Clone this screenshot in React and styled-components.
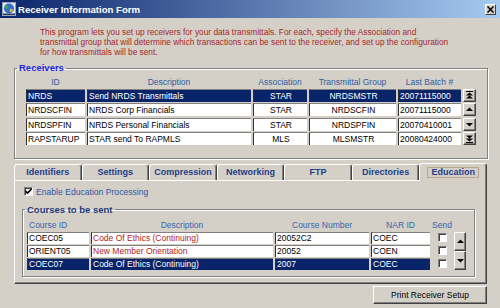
import React from "react"
import styled, { createGlobalStyle } from "styled-components"

const GlobalStyle = createGlobalStyle`
  * { box-sizing: border-box; }
  html, body { margin: 0; padding: 0; background: #d4d0c8; }
  body { font-family: "Liberation Sans", Arial, sans-serif; }
`

const receivers = [
  { id: "NRDS", desc: "Send NRDS Transmittals", assoc: "STAR", group: "NRDSMSTR", batch: "20071115000", nav: "first", sel: true },
  { id: "NRDSCFIN", desc: "NRDS Corp Financials", assoc: "STAR", group: "NRDSCFIN", batch: "20071115000", nav: "prev" },
  { id: "NRDSPFIN", desc: "NRDS Personal Financials", assoc: "STAR", group: "NRDSPFIN", batch: "20070410001", nav: "next" },
  { id: "RAPSTARUP", desc: "STAR send To RAPMLS", assoc: "MLS", group: "MLSMSTR", batch: "20080424000", nav: "last" },
]

const courses = [
  { id: "COEC05", desc: "Code Of Ethics (Continuing)", num: "20052C2", nar: "COEC" },
  { id: "ORIENT05", desc: "New Member Orientation", num: "20052", nar: "COEN" },
  { id: "COEC07", desc: "Code Of Ethics (Continuing)", num: "2007", nar: "COEC", sel: true },
]

const tabs = ["Identifiers", "Settings", "Compression", "Networking", "FTP", "Directories", "Education"]

const NavIcon = ({ kind }) => (
  <svg width="9" height="9" viewBox="0 0 9 9">
    {kind === "first" && (
      <g fill="#000">
        <rect x="1" y="0" width="7" height="1" />
        <polygon points="4.5,1.5 8,4.5 1,4.5" />
        <polygon points="4.5,4.5 8,7.5 1,7.5" />
      </g>
    )}
    {kind === "prev" && <polygon points="4.5,2.5 8,6 1,6" fill="#000" />}
    {kind === "next" && <polygon points="1,3 8,3 4.5,6.5" fill="#000" />}
    {kind === "last" && (
      <g fill="#000">
        <polygon points="1,1.5 8,1.5 4.5,4.5" />
        <polygon points="1,4.5 8,4.5 4.5,7.5" />
        <rect x="1" y="8" width="7" height="1" />
      </g>
    )}
  </svg>
)

const App = () => {
  return (
    <Window>
      <GlobalStyle />
      <TitleBar>
        <svg width="14" height="14" viewBox="0 0 14 14">
          <rect x="0.5" y="0.5" width="13" height="13" fill="#e4e4e4" stroke="#9aa6b8" />
          <circle cx="7" cy="6.5" r="5" fill="#2f6fd0" />
          <path d="M4 3.5 C6 3 7 4.5 6 6 C5 7.5 3.5 7 2.6 5.5 Z" fill="#3fa83a" />
          <path d="M8 7 C9.5 6.5 11.5 7.5 10.5 9.5 C9.5 10.5 8 10 7.8 8.8 Z" fill="#e0c030" />
          <rect x="1" y="11.5" width="12" height="1.5" fill="#2a3a60" />
        </svg>
        <TitleText>Receiver Information Form</TitleText>
        <CloseButton>
          <svg width="7" height="7" viewBox="0 0 7 7">
            <path d="M0.5 0.5 L6.5 6.5 M6.5 0.5 L0.5 6.5" stroke="#000" strokeWidth="1.5" />
          </svg>
        </CloseButton>
      </TitleBar>

      <Intro>
        This program lets you set up receivers for your data transmittals. For each, specify the Association and<br />
        transmittal group that will determine which transactions can be sent to the receiver, and set up the configuration<br />
        for how transmittals will be sent.
      </Intro>

      <ReceiversGroup>
        <Legend $color="#2323dc">Receivers</Legend>
        <ReceiverList>
          <ReceiverGrid $header>
            <HeadCell>ID</HeadCell>
            <HeadCell>Description</HeadCell>
            <HeadCell>Association</HeadCell>
            <HeadCell>Transmittal Group</HeadCell>
            <HeadCell>Last Batch #</HeadCell>
            <span />
          </ReceiverGrid>
          <ReceiverGrid>
            {receivers.map((r) => (
              <React.Fragment key={r.id}>
                <Cell $sel={r.sel}>{r.id}</Cell>
                <Cell $sel={r.sel}>{r.desc}</Cell>
                <Cell $sel={r.sel} $center>{r.assoc}</Cell>
                <Cell $sel={r.sel} $center>{r.group}</Cell>
                <Cell $sel={r.sel}>{r.batch}</Cell>
                <NavButton><NavIcon kind={r.nav} /></NavButton>
              </React.Fragment>
            ))}
          </ReceiverGrid>
        </ReceiverList>
      </ReceiversGroup>

      <TabStrip>
        {tabs.map((t) => (
          <Tab key={t} $active={t === "Education"}>
            {t === "Education" ? <Focus>{t}</Focus> : t}
          </Tab>
        ))}
      </TabStrip>
      <TabPanel>
        <CheckRow>
          <CheckBox>
            <svg width="7" height="7" viewBox="0 0 7 7">
              <path d="M0.5 3 L2.5 5 L6.5 1" stroke="#000" strokeWidth="1.6" fill="none" />
            </svg>
          </CheckBox>
          Enable Education Processing
        </CheckRow>
        <CoursesGroup>
          <Legend $color="#1c3a7c">Courses to be sent</Legend>
          <CourseList>
            <CourseGrid $header>
              <HeadCell $left $color="#3366b0">Course ID</HeadCell>
              <HeadCell $color="#3366b0">Description</HeadCell>
              <HeadCell $color="#3366b0">Course Number</HeadCell>
              <HeadCell $color="#3366b0">NAR ID</HeadCell>
              <HeadCell $color="#3366b0">Send</HeadCell>
              <span />
            </CourseGrid>
            <CourseGrid>
              {courses.map((c) => (
                <React.Fragment key={c.id + c.num}>
                  <Cell $sel={c.sel} $small>{c.id}</Cell>
                  <Cell $sel={c.sel} $small $red={!c.sel}>{c.desc}</Cell>
                  <Cell $sel={c.sel} $small>{c.num}</Cell>
                  <Cell $sel={c.sel} $small>{c.nar}</Cell>
                  <SendCell><CheckBox /></SendCell>
                </React.Fragment>
              ))}
              <Scroller>
                <NavButton $tall><NavIcon kind="prev" /></NavButton>
                <NavButton $tall><NavIcon kind="next" /></NavButton>
              </Scroller>
            </CourseGrid>
          </CourseList>
        </CoursesGroup>
      </TabPanel>

      <PrintButton>Print Receiver Setup</PrintButton>
    </Window>
  )
}

export default App

const Window = styled.div`
  width: 500px;
  height: 308px;
  overflow: hidden;
  background: #d4d0c8;
  display: flex;
  flex-direction: column;
  font-family: "Liberation Sans", Arial, sans-serif;
`

const TitleBar = styled.div`
  height: 18px;
  display: flex;
  align-items: center;
  gap: 2px;
  padding: 0 4px 0 2px;
  background: linear-gradient(to right, #0a246a, #a6caf0);
`

const TitleText = styled.span`
  color: #fff;
  font-weight: bold;
  font-size: 9.6px;
`

const CloseButton = styled.div`
  margin-left: auto;
  width: 11px;
  height: 11px;
  display: flex;
  align-items: center;
  justify-content: center;
  background: #d4d0c8;
  border: 1px solid;
  border-color: #fff #404040 #404040 #fff;
`

const Intro = styled.p`
  margin: 9px 0 0 40px;
  font-size: 8.3px;
  line-height: 10px;
  color: #a52828;
  white-space: nowrap;
`

const Group = styled.fieldset`
  padding: 0;
  min-width: 0;
  border: 1px solid #808080;
  box-shadow: inset 1px 1px #fff, 1px 1px #fff;
`

const ReceiversGroup = styled(Group)`
  margin: 6px 12px 0 14px;
`

const CoursesGroup = styled(Group)`
  margin: 8px 0 0 0;
`

const Legend = styled.legend`
  margin-left: 2px;
  padding: 0 2px;
  font-size: 9.5px;
  line-height: 10px;
  font-weight: bold;
  color: ${(p) => p.$color};
`

const ReceiverList = styled.div`
  padding: 4px 10px 13px 11px;
`

const ReceiverGrid = styled.div`
  display: grid;
  grid-template-columns: 59px 164px 54px 87px 63px 13px;
  column-gap: 2px;
  grid-auto-rows: ${(p) => (p.$header ? "10px" : "13px")};
  row-gap: 1.33px;
  margin-bottom: ${(p) => (p.$header ? "2px" : "0")};
`

const HeadCell = styled.div`
  font-size: 8.5px;
  line-height: 10px;
  color: ${(p) => p.$color || "#2f5d9f"};
  text-align: ${(p) => (p.$left ? "left" : "center")};
  padding-left: ${(p) => (p.$left ? "2px" : "0")};
  white-space: nowrap;
`

const Cell = styled.div`
  background: ${(p) => (p.$sel ? "#0a246a" : "#fff")};
  color: ${(p) => (p.$sel ? "#fff" : p.$red ? "#b01c1c" : "#000")};
  border-left: 1px solid #303030;
  border-top: 1px solid #808080;
  font-size: 8.5px;
  line-height: ${(p) => (p.$small ? "11px" : "12px")};
  padding-left: 1px;
  text-align: ${(p) => (p.$center ? "center" : "left")};
  white-space: nowrap;
  overflow: hidden;
`

const NavButton = styled.div`
  display: flex;
  align-items: center;
  justify-content: center;
  background: #d4d0c8;
  border: 1px solid;
  border-color: #fff #404040 #404040 #fff;
  box-shadow: inset -1px -1px #808080;
  ${(p) => p.$tall && "flex: 1;"}
`

const TabStrip = styled.div`
  margin: 4px 13px 0 14px;
  height: 17px;
  display: grid;
  grid-template-columns: repeat(7, 1fr);
  align-items: end;
  position: relative;
  z-index: 1;
`

const Tab = styled.div`
  height: ${(p) => (p.$active ? "18px" : "16px")};
  margin-bottom: ${(p) => (p.$active ? "-1px" : "0")};
  display: flex;
  align-items: center;
  justify-content: center;
  background: #d4d0c8;
  border: 1px solid;
  border-bottom: none;
  border-color: #fff #404040 transparent #fff;
  box-shadow: inset -1px 0 #808080;
  border-radius: 3px 3px 0 0;
  font-size: 9px;
  font-weight: bold;
  color: #1f3d8a;
  white-space: nowrap;
`

const Focus = styled.span`
  border: 1px solid #b8a58c;
  padding: 0 3px;
  line-height: 9px;
`

const TabPanel = styled.div`
  margin: 0 13px 0 14px;
  height: 104px;
  border: 1px solid;
  border-color: #fff #404040 #404040 #fff;
  box-shadow: inset -1px -1px #808080;
  padding: 6px 11px 5px 7px;
  display: flex;
  flex-direction: column;
`

const CheckRow = styled.div`
  display: flex;
  align-items: center;
  gap: 3px;
  padding-left: 2px;
  height: 10px;
  font-size: 8.6px;
  color: #2e56a6;
`

const CheckBox = styled.span`
  width: 9px;
  height: 9px;
  display: inline-flex;
  align-items: center;
  justify-content: center;
  background: #fff;
  border: 1px solid;
  border-color: #808080 #fff #fff #808080;
  box-shadow: inset 1px 1px #404040;
`

const CourseList = styled.div`
  padding: 5px 5px 6px 4px;
`

const CourseGrid = styled.div`
  display: grid;
  grid-template-columns: 62px 182px 94px 59px 20px 12px;
  column-gap: 2px;
  grid-auto-rows: ${(p) => (p.$header ? "10px" : "12px")};
  row-gap: 1px;
  margin-bottom: ${(p) => (p.$header ? "2px" : "0")};
`

const SendCell = styled.div`
  display: flex;
  align-items: center;
  justify-content: center;
`

const Scroller = styled.div`
  grid-column: 6;
  grid-row: 1 / span 3;
  display: flex;
  flex-direction: column;
`

const PrintButton = styled.div`
  align-self: flex-end;
  margin: 2px 13px 0 0;
  width: 114px;
  height: 18px;
  display: flex;
  align-items: center;
  justify-content: center;
  background: #d4d0c8;
  border: 1px solid;
  border-color: #fff #404040 #404040 #fff;
  box-shadow: inset -1px -1px #808080;
  font-size: 8.5px;
  color: #000;
`
